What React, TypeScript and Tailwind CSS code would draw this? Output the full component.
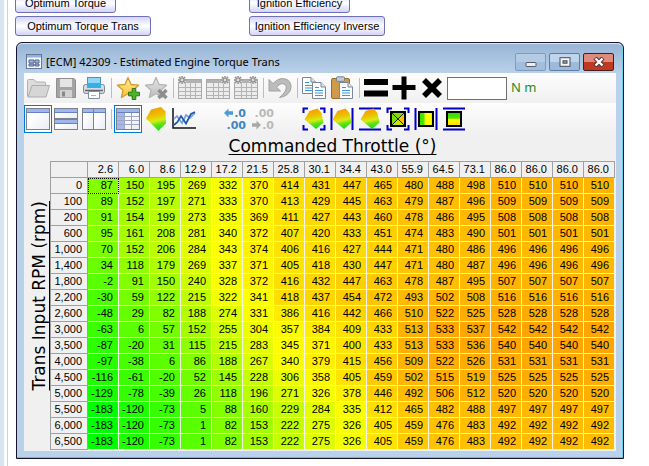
import type { ReactNode } from "react";
import clsx from "clsx";

const THROTTLE = [
  "2.6", "6.0", "8.6", "12.9", "17.2", "21.5", "25.8", "30.1", "34.4",
  "43.0", "55.9", "64.5", "73.1", "86.0", "86.0", "86.0", "86.0",
];

const ROWS: { rpm: string; values: number[] }[] = [
  { rpm: "0", values: [87, 150, 195, 269, 332, 370, 414, 431, 447, 465, 480, 488, 498, 510, 510, 510, 510] },
  { rpm: "100", values: [89, 152, 197, 271, 333, 370, 413, 429, 445, 463, 479, 487, 496, 509, 509, 509, 509] },
  { rpm: "200", values: [91, 154, 199, 273, 335, 369, 411, 427, 443, 460, 478, 486, 495, 508, 508, 508, 508] },
  { rpm: "600", values: [95, 161, 208, 281, 340, 372, 407, 420, 433, 451, 474, 483, 490, 501, 501, 501, 501] },
  { rpm: "1,000", values: [70, 152, 206, 284, 343, 374, 406, 416, 427, 444, 471, 480, 486, 496, 496, 496, 496] },
  { rpm: "1,400", values: [34, 118, 179, 269, 337, 371, 405, 418, 430, 447, 471, 480, 487, 496, 496, 496, 496] },
  { rpm: "1,800", values: [-2, 91, 150, 240, 328, 372, 416, 432, 447, 463, 478, 487, 495, 507, 507, 507, 507] },
  { rpm: "2,200", values: [-30, 59, 122, 215, 322, 341, 418, 437, 454, 472, 493, 502, 508, 516, 516, 516, 516] },
  { rpm: "2,600", values: [-48, 29, 82, 188, 274, 331, 386, 416, 442, 466, 510, 522, 525, 528, 528, 528, 528] },
  { rpm: "3,000", values: [-63, 6, 57, 152, 255, 304, 357, 384, 409, 433, 513, 533, 537, 542, 542, 542, 542] },
  { rpm: "3,500", values: [-87, -20, 31, 115, 215, 283, 345, 371, 400, 433, 513, 533, 536, 540, 540, 540, 540] },
  { rpm: "4,000", values: [-97, -38, 6, 86, 188, 267, 340, 379, 415, 456, 509, 522, 526, 531, 531, 531, 531] },
  { rpm: "4,500", values: [-116, -61, -20, 52, 145, 228, 306, 358, 405, 459, 502, 515, 519, 525, 525, 525, 525] },
  { rpm: "5,000", values: [-129, -78, -39, 26, 118, 196, 271, 326, 378, 446, 492, 506, 512, 520, 520, 520, 520] },
  { rpm: "5,500", values: [-183, -120, -73, 5, 88, 160, 229, 284, 335, 412, 465, 482, 488, 497, 497, 497, 497] },
  { rpm: "6,000", values: [-183, -120, -73, 1, 82, 153, 222, 275, 326, 405, 459, 476, 483, 492, 492, 492, 492] },
  { rpm: "6,500", values: [-183, -120, -73, 1, 82, 153, 222, 275, 326, 405, 459, 476, 483, 492, 492, 492, 492] },
];

const MIN = -183;
const MID = 345;
const MAX = 542;

// green -> yellow -> orange
function heat(v: number) {
  if (v <= MID) {
    return `rgb(${Math.round((255 * (v - MIN)) / (MID - MIN))}, 255, 0)`;
  }
  return `rgb(255, ${Math.round(255 - (90 * (v - MID)) / (MAX - MID))}, 0)`;
}

function Icon({ children }: { children: ReactNode }) {
  return (
    <svg viewBox="0 0 24 24" className="size-6 shrink-0" aria-hidden="true">
      {children}
    </svg>
  );
}

function Tool({ label, active, children }: { label: string; active?: boolean; children: ReactNode }) {
  return (
    <button
      type="button"
      aria-label={label}
      className={clsx(
        "flex h-7 w-7 shrink-0 items-center justify-center border",
        active ? "border-[#0078d7] bg-white" : "border-transparent"
      )}
    >
      <Icon>{children}</Icon>
    </button>
  );
}

function Sep() {
  return (
    <div className="flex w-1.5 shrink-0 justify-center">
      <div className="h-5 w-px bg-[#bdbdbd]" />
    </div>
  );
}

const STAR = "M12 1.5 L15 8.5 L22.5 9.2 L17 14.2 L18.6 21.5 L12 17.8 L5.4 21.5 L7 14.2 L1.5 9.2 L9 8.5 Z";

function GreyTable({ gears }: { gears: number[] }) {
  return (
    <>
      <rect x="0.5" y="3.5" width="23" height="19" fill="#ececec" stroke="#a9a9a9" />
      <rect x="1" y="4" width="22" height="3" fill="#b2b2b2" />
      <path d="M1 11.5H23M1 15.5H23M1 19.5H23M7.5 7V22M12.5 7V22M17.5 7V22" stroke="#b4b4b4" />
      {gears.map((x) => (
        <g key={x}>
          <circle cx={x} cy="4" r="4" fill="#e9e9e9" />
          <path
            d={`M${x} 0V8M${x - 4} 4H${x + 4}M${x - 3} 1L${x + 3} 7M${x + 3} 1L${x - 3} 7`}
            stroke="#888"
            strokeWidth="1.3"
          />
          <circle cx={x} cy="4" r="1.4" fill="#ddd" />
        </g>
      ))}
    </>
  );
}

function Surface({ small }: { small?: boolean }) {
  return (
    <path
      d={
        small
          ? "M15.5 1.5 L19.5 6 L21.5 15.5 L14 22 L2.5 12.5 L7.5 4 Z"
          : "M7 2.5 L17 0 L21.5 4.5 L22 16.3 L14.5 23.7 L2 11.5 Z"
      }
      fill="url(#surface)"
    />
  );
}

function PaneFrame({ y = 2, h = 20, x = 1, w = 22 }: { x?: number; y?: number; w?: number; h?: number }) {
  return (
    <>
      <rect x={x - 0.5} y={y - 0.5} width={w + 1} height={h + 1} fill="url(#pane)" stroke="#7d818e" />
      <rect x={x} y={y} width={w} height="3" fill="#9db6f0" />
      <path d={`M${x} ${y + 3.5}H${x + w}`} stroke="#6580c4" />
    </>
  );
}

const CORNERS = "M1.5 6V1.5H6M18 1.5H22.5V6M22.5 18V22.5H18M6 22.5H1.5V18";
const SIDES = "M1.5 1V23M22.5 1V23";
const TOPS = "M1 1.5H23M1 22.5H23";

function Guides({ d }: { d: string }) {
  return <path d={d} fill="none" stroke="#0000c8" strokeWidth="2" />;
}

function Defs() {
  return (
    <svg className="absolute size-0" aria-hidden="true">
      <defs>
        <linearGradient id="surface" x1="0.4" y1="0" x2="0.6" y2="1">
          <stop offset="0" stopColor="#f59a00" />
          <stop offset="0.35" stopColor="#ecc000" />
          <stop offset="0.58" stopColor="#d8ea18" />
          <stop offset="0.75" stopColor="#60e410" />
          <stop offset="1" stopColor="#10d820" />
        </linearGradient>
        <linearGradient id="pane" x1="0" y1="0" x2="1" y2="1">
          <stop offset="0.3" stopColor="#fff" />
          <stop offset="1" stopColor="#e9ecf5" />
        </linearGradient>
        <linearGradient id="gold" x1="0" y1="0" x2="0" y2="1">
          <stop offset="0" stopColor="#fff3a0" />
          <stop offset="1" stopColor="#f6bd2c" />
        </linearGradient>
        <linearGradient id="silver" x1="0" y1="0" x2="0" y2="1">
          <stop offset="0" stopColor="#e6e6e6" />
          <stop offset="1" stopColor="#bcbcbc" />
        </linearGradient>
        <linearGradient id="map" x1="0" y1="0" x2="1" y2="0">
          <stop offset="0" stopColor="#30e000" />
          <stop offset="0.35" stopColor="#50e800" />
          <stop offset="0.45" stopColor="#ffff00" />
          <stop offset="0.8" stopColor="#ffff00" />
          <stop offset="1" stopColor="#ffc800" />
        </linearGradient>
        <linearGradient id="mapdown" x1="0" y1="0" x2="0" y2="1">
          <stop offset="0.1" stopColor="#30e000" />
          <stop offset="0.45" stopColor="#50e800" />
          <stop offset="0.5" stopColor="#ffff00" />
          <stop offset="1" stopColor="#ffe000" />
        </linearGradient>
      </defs>
    </svg>
  );
}

function Page({ x, y }: { x: number; y: number }) {
  return (
    <g transform={`translate(${x} ${y})`}>
      <path d="M0.5 0.5H9L13.5 5V16.5H0.5Z" fill="#fbfdff" stroke="#7b8794" />
      <path d="M9 0.5V5H13.5" fill="#dde6ef" stroke="#7b8794" />
      <path d="M3 5.5H7M3 8.5H11M3 11H11M3 13.5H11" stroke="#3d97dc" strokeWidth="1.2" />
    </g>
  );
}

function FileTools() {
  return (
    <div className="flex h-[30px] items-center bg-linear-to-b from-[#fdfdfd] to-[#f0f0f0]">
      <Tool label="Open">
        <path d="M1.5 20.5V4.5Q1.5 3.5 2.5 3.5H8L10 6H18.5Q19.5 6 19.5 7V9" fill="#dcdcdc" stroke="#b0b0b0" />
        <path d="M2 21L6 9.5H23.5L20 21Z" fill="#d6d6d6" stroke="#adadad" />
      </Tool>
      <Tool label="Save">
        <path d="M2.5 2.5H20L21.5 4V21.5H2.5Z" fill="#a4a4a4" stroke="#8f8f8f" />
        <rect x="6" y="3" width="12" height="8" fill="#e4e4e4" />
        <rect x="6" y="14" width="12" height="7.5" fill="#d2d2d2" />
        <rect x="8" y="15.5" width="3" height="5" fill="#888" />
      </Tool>
      <Tool label="Print">
        <rect x="5.5" y="1.5" width="13" height="9" fill="#8fd6f7" stroke="#4c93b8" />
        <rect x="1.5" y="8.5" width="21" height="9" rx="2" fill="#d5dbe1" stroke="#7c8894" />
        <rect x="5" y="7" width="14" height="5" fill="#35b0e5" />
        <path d="M3 14.5H21" stroke="#5e6974" strokeWidth="1.5" />
        <path d="M6.5 15.5H17.5V22.5H6.5Z" fill="#fff" stroke="#84909c" />
        <path d="M9 19.5H14" stroke="#a7b3be" />
      </Tool>
      <Sep />
      <Tool label="Add favorite">
        <path d={STAR} fill="url(#gold)" stroke="#d49a2a" strokeWidth="1.3" strokeLinejoin="round" />
        <path d="M16.2 12.5H19.8V16.2H23.5V19.8H19.8V23.5H16.2V19.8H12.5V16.2H16.2Z" fill="#4eb32c" stroke="#2c7a16" />
      </Tool>
      <Tool label="Remove favorite">
        <path d={STAR} fill="url(#silver)" stroke="#b5b5b5" strokeWidth="1.3" strokeLinejoin="round" />
        <path d="M14.5 14L22.5 22M22.5 14L14.5 22" stroke="#8e8e8e" strokeWidth="3.4" />
      </Tool>
      <Sep />
      <Tool label="Column axis">
        <GreyTable gears={[4]} />
      </Tool>
      <Tool label="Row axis">
        <GreyTable gears={[19]} />
      </Tool>
      <Tool label="Both axes">
        <GreyTable gears={[4, 19]} />
      </Tool>
      <Sep />
      <Tool label="Undo">
        <path
          d="M1 3.5V15H12.5L8.5 11.2Q12.5 6.5 16 8Q20 10 17 15.5Q15.5 18.5 11.5 21.5Q19 20.5 22 15Q25 8 19.5 3.8Q12 0 5 7.5Z"
          fill="#bcbcbc"
          stroke="#a2a2a2"
        />
      </Tool>
      <Sep />
      <Tool label="Copy">
        <Page x={0} y={1} />
        <Page x={10} y={6} />
      </Tool>
      <Tool label="Paste">
        <rect x="1.5" y="2.5" width="18" height="20" rx="1.5" fill="#cf9a4c" stroke="#9b6a28" />
        <rect x="6.5" y="0.8" width="8" height="4.5" rx="1" fill="#c3ccd5" stroke="#77828d" />
        <Page x={9} y={6} />
      </Tool>
      <Sep />
      <Tool label="Set">
        <path d="M0 6H24M0 17.5H24" stroke="#000" strokeWidth="6" />
      </Tool>
      <Tool label="Add">
        <path d="M12 0.5V23.5M0.5 11.5H23.5" stroke="#000" strokeWidth="5" />
      </Tool>
      <Tool label="Multiply">
        <path d="M4 4L20 20M20 4L4 20" stroke="#000" strokeWidth="5.6" />
      </Tool>
      <label className="flex items-center gap-1 pl-px font-['Noto_Sans',sans-serif] text-[13px] text-[#1e8c1e]">
        <input
          aria-label="Value"
          className="h-[23px] w-[60px] border border-[#707070] bg-white px-1 text-black outline-none"
        />
        N m
      </label>
    </div>
  );
}

function ViewTools() {
  return (
    <div className="flex h-[31px] items-center bg-linear-to-b from-[#fdfdfd] to-[#f0f0f0]">
      <Tool label="Single view" active>
        <PaneFrame />
      </Tool>
      <Tool label="Split rows">
        <PaneFrame y={2} h={9} />
        <PaneFrame y={13} h={9} />
      </Tool>
      <Tool label="Split columns">
        <PaneFrame x={1} w={10} />
        <PaneFrame x={12} w={11} />
      </Tool>
      <Sep />
      <Tool label="Table" active>
        <PaneFrame />
        <rect x="1" y="6" width="7" height="16" fill="#a3b8ee" />
        <path d="M1 9.5H23M1 13.5H23M1 17.5H23M8.5 6V22M15.5 6V22" stroke="#a0a5c2" />
      </Tool>
      <Tool label="Surface">
        <Surface />
      </Tool>
      <Tool label="Chart">
        <path d="M1 1V21H24" fill="none" stroke="#111" strokeWidth="1.5" />
        <path d="M2 12L5 9L10 16L14 8L18 11L23 6" fill="none" stroke="#74a2dc" strokeWidth="1.7" />
        <path d="M2 18L5.5 15L9 9L14 16.5L19 7L23 5" fill="none" stroke="#2257ac" strokeWidth="1.7" />
      </Tool>
      <div className="w-[23px]" />
      <Tool label="More decimals">
        <g className="font-['DejaVu_Sans',sans-serif] text-[11px] font-bold" fill="#3f86c2">
          <text x="23" y="10" textAnchor="end">.0</text>
          <text x="23" y="22" textAnchor="end">.00</text>
        </g>
        <path d="M1 6L5.5 1.5V4.2H10V7.8H5.5V10.5Z" fill="#4b9bd8" />
      </Tool>
      <Tool label="Fewer decimals">
        <g className="font-['DejaVu_Sans',sans-serif] text-[11px] font-bold" fill="#b9b9b9">
          <text x="23" y="10" textAnchor="end">.00</text>
          <text x="23" y="22" textAnchor="end">.0</text>
        </g>
        <path d="M10 18L5.5 13.5V16.2H1V19.8H5.5V22.5Z" fill="#a9a9a9" />
      </Tool>
      <div className="w-[23px]" />
      <Tool label="Smooth surface">
        <Guides d={CORNERS} />
        <Surface small />
      </Tool>
      <Tool label="Smooth surface horizontally">
        <Guides d={SIDES} />
        <Surface small />
      </Tool>
      <Tool label="Smooth surface vertically">
        <Guides d={TOPS} />
        <Surface small />
      </Tool>
      <Tool label="Interpolate">
        <Guides d={CORNERS} />
        <rect x="5" y="5" width="14" height="14" fill="#7be000" stroke="#000" strokeWidth="2" />
        <path d="M12 12L18 6V18Z" fill="#ffc000" />
        <path d="M12 12L6 18H18Z" fill="#c8e800" />
        <path d="M6 6L18 18M18 6L6 18" stroke="#222" />
      </Tool>
      <Tool label="Interpolate horizontally">
        <Guides d={SIDES} />
        <rect x="5" y="5" width="14" height="14" fill="url(#map)" stroke="#000" strokeWidth="2" />
      </Tool>
      <Tool label="Interpolate vertically">
        <Guides d={TOPS} />
        <rect x="5" y="5" width="14" height="14" fill="url(#mapdown)" stroke="#000" strokeWidth="2" />
      </Tool>
    </div>
  );
}

function TorqueTable() {
  return (
    <table className="w-full table-fixed border-separate border-spacing-0 border-l border-t border-[#a0a0a0] text-right font-['Liberation_Sans',sans-serif] text-[11px] leading-[15px]">
      <colgroup>
        <col className="w-[37px]" />
        {THROTTLE.map((_, i) => (
          <col key={i} />
        ))}
      </colgroup>
      <thead>
        <tr>
          <th className="border-b border-r border-[#a0a0a0] p-0" aria-label="RPM" />
          {THROTTLE.map((t, i) => (
            <th key={i} scope="col" className="border-b border-r border-[#a0a0a0] p-0 pr-[5px] font-normal">
              {t}
            </th>
          ))}
        </tr>
      </thead>
      <tbody>
        {ROWS.map((row, r) => (
          <tr key={row.rpm}>
            <th scope="row" className="border-b border-r border-[#a0a0a0] p-0 pr-[5px] font-normal">
              {row.rpm}
            </th>
            {row.values.map((v, c) => (
              <td
                key={c}
                className={clsx(
                  "border-b border-r border-[#f4f4e6] p-0 pr-[5px]",
                  r === 0 && c === 0 && "outline-1 -outline-offset-1 outline-dotted outline-black"
                )}
                style={{ backgroundColor: heat(v) }}
              >
                {v}
              </td>
            ))}
          </tr>
        ))}
      </tbody>
    </table>
  );
}

function LinkButton({ children, wide }: { children: ReactNode; wide?: boolean }) {
  return (
    <button
      type="button"
      className={clsx(
        "h-5 whitespace-nowrap rounded-[3px] border border-[#6f70b8] bg-linear-to-b from-[#d3d3f8] via-white to-[#d3d3f8] text-center font-['Liberation_Sans',sans-serif] text-[11px] leading-4",
        wide ? "w-[136px]" : "w-[101px]"
      )}
    >
      {children}
    </button>
  );
}

function TitleBar() {
  return (
    <div className="flex h-[29px] items-center gap-1 pl-[2px] pt-1.5">
      <svg viewBox="0 0 16 15" className="h-[15px] w-4" aria-hidden="true">
        <rect x="0.5" y="0.5" width="15" height="14" fill="#f4f7fb" stroke="#66789a" />
        <rect x="1" y="1" width="14" height="2.5" fill="#8fb0e0" />
        <path d="M3 6H8V9H3ZM9 6H13V9H9ZM3 10H8V12H3ZM9 10H13V12H9Z" fill="#a8b9d8" stroke="#53678f" />
      </svg>
      <h1 className="flex-1 truncate font-['Noto_Sans',sans-serif] text-[11px] leading-4">
        [ECM] 42309 - Estimated Engine Torque Trans
      </h1>
      <div className="flex gap-[3px] pr-[2px]">
        <button
          type="button"
          aria-label="Minimize"
          className="flex h-[18px] w-[31px] items-center justify-center rounded-xs border border-[#7f9bbd] bg-linear-to-b from-[#b5cbe4] from-50% to-[#a3bedc] to-50%"
        >
          <svg viewBox="0 0 12 10" className="h-2.5 w-3">
            <rect x="1" y="5.5" width="10" height="4" rx="0.5" fill="#eee" stroke="#555d69" />
          </svg>
        </button>
        <button
          type="button"
          aria-label="Maximize"
          className="flex h-[18px] w-[31px] items-center justify-center rounded-xs border border-[#5f7da3] bg-linear-to-b from-[#c0d5ec] from-50% to-[#9dbada] to-50%"
        >
          <svg viewBox="0 0 12 10" className="h-2.5 w-3">
            <rect x="1" y="0.7" width="10" height="8.6" fill="#f4f4f4" stroke="#454d5c" />
            <rect x="4" y="3.8" width="4" height="2.4" fill="#86a5c9" stroke="#454d5c" />
          </svg>
        </button>
        <button
          type="button"
          aria-label="Close"
          className="flex h-[18px] w-[31px] items-center justify-center rounded-xs border border-[#4f1a1c] bg-linear-to-b from-[#de8b7c] from-50% to-[#bf3a22] to-50%"
        >
          <svg viewBox="0 0 12 10" className="h-2.5 w-3">
            <path d="M2 1L10 9M10 1L2 9" stroke="#5b3438" strokeWidth="4.4" />
            <path d="M2.5 1.5L9.5 8.5M9.5 1.5L2.5 8.5" stroke="#fff" strokeWidth="2.4" />
          </svg>
        </button>
      </div>
    </div>
  );
}

export default function App() {
  return (
    <div className="flex min-h-screen overflow-hidden bg-white text-black">
      <Defs />
      <div className="w-1 shrink-0 bg-[#d9e4f2]" />
      <div className="ml-[3px] min-w-0 flex-1 border-l border-[#cfcfd4] pl-[7px]">
        {/* links scrolled partly out of view */}
        <div className="flex h-9 flex-col justify-end overflow-hidden">
          <div className="grid shrink-0 grid-cols-[234px_1fr] gap-y-[3px]">
            <LinkButton>Optimum Torque</LinkButton>
            <LinkButton>Ignition Efficiency</LinkButton>
            <LinkButton wide>Optimum Torque Trans</LinkButton>
            <LinkButton wide>Ignition Efficiency Inverse</LinkButton>
          </div>
        </div>

        <div className="ml-px mr-[25px] mt-1.5 rounded-t-md border border-[#14142a] bg-[#b9d1ea] bg-linear-to-b from-[#98b4d4] to-[#b9d1ea] to-[30px]">
          <div className="rounded-t-md border-b border-r border-t border-t-[#dbe8f5] border-b-[#4fc3ea] border-r-[#6fd0ee] pb-1.5 pl-[7px] pr-1.5">
            <TitleBar />
            <div className="bg-[#f0f0f0]">
              <FileTools />
              <ViewTools />
              <div className="flex pb-px pr-px">
                <div className="flex w-[26px] shrink-0 items-center justify-center pl-1 pt-2">
                  <span className="rotate-180 whitespace-nowrap font-['DejaVu_Sans',sans-serif] text-[17px] leading-5 underline decoration-1 underline-offset-1 [writing-mode:vertical-rl]">
                    Trans Input RPM (rpm)
                  </span>
                </div>
                <div className="min-w-0 flex-1">
                  <h2 className="h-[27px] text-center font-['DejaVu_Sans',sans-serif] text-[17px] leading-6 underline decoration-1 underline-offset-2">
                    Commanded Throttle (°)
                  </h2>
                  <TorqueTable />
                </div>
              </div>
            </div>
          </div>
        </div>
      </div>
    </div>
  );
}
